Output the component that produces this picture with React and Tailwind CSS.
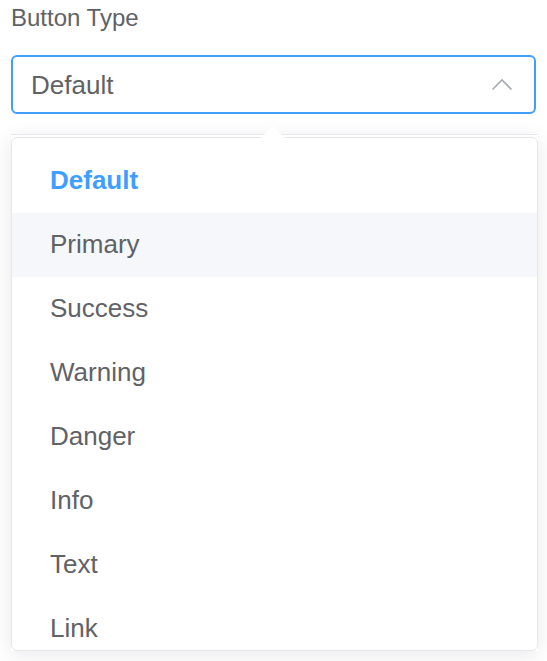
import { useState } from 'react'

const options = ['Default', 'Primary', 'Success', 'Warning', 'Danger', 'Info', 'Text', 'Link']

export default function App() {
  const [selected] = useState('Default')
  const hovered = 'Primary'

  return (
    <div
      className="min-h-[661px] bg-white pl-[11px] pt-[4px] text-[#606266]"
      style={{ fontFamily: '"Liberation Sans", Arial, sans-serif' }}
    >
      <div className="text-[24px] leading-[28px]">Button Type</div>

      {/* Select input */}
      <div className="mt-[23px] flex h-[59px] w-[525px] items-center justify-between rounded-[6px] border-2 border-[#409eff] bg-white pl-[18px] pr-[21px]">
        <span className="text-[26px] leading-none">{selected}</span>
        <svg width="22" height="13" viewBox="0 0 22 13" fill="none">
          <path d="M1.5 11.5 L11 2 L20.5 11.5" stroke="#a8abb2" strokeWidth="1.6" />
        </svg>
      </div>

      {/* Dropdown popper */}
      <div className="relative mt-[20px] w-[527px] shadow-[0_4px_20px_rgba(0,0,0,0.09)]">
        <div className="h-px bg-[#e4e7ed]" />
        <div className="mt-[2px] h-[514px] overflow-hidden rounded-[6px] border border-[#e4e7ed] bg-white pt-[11px]">
          {options.map((opt) => (
            <div
              key={opt}
              className={
                'h-[64px] pl-[38px] text-[26px] leading-[62px] ' +
                (opt === selected ? 'font-bold text-[#409eff] ' : '') +
                (opt === hovered ? 'bg-[#f5f7fa]' : '')
              }
            >
              {opt}
            </div>
          ))}
        </div>
        {/* arrow */}
        <svg
          className="absolute left-[249px] top-[-8px]"
          width="26"
          height="13"
          viewBox="0 0 26 13"
        >
          <path d="M0 13 L13 0 L26 13 Z" fill="#ffffff" />
        </svg>
      </div>
    </div>
  )
}
